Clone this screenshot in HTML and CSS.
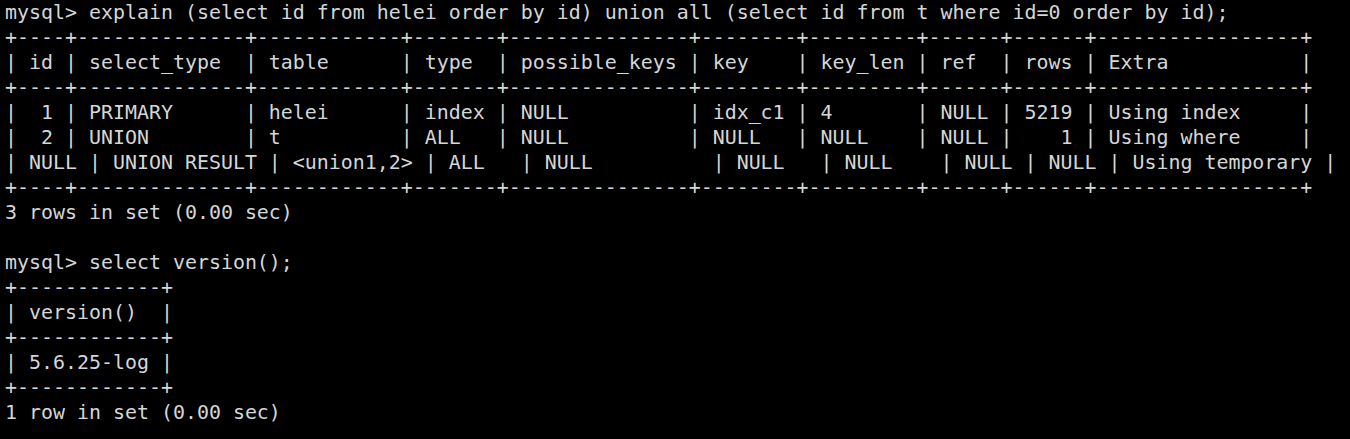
FILE: index.html
```html
<!DOCTYPE html>
<html lang="en">
<head>
<meta charset="utf-8">
<title>mysql</title>
<link rel="stylesheet" href="styles.css">
</head>
<body>
<pre class="terminal">mysql&gt; explain (select id from helei order by id) union all (select id from t where id=0 order by id);
+----+--------------+------------+-------+---------------+--------+---------+------+------+-----------------+
| id | select_type  | table      | type  | possible_keys | key    | key_len | ref  | rows | Extra           |
+----+--------------+------------+-------+---------------+--------+---------+------+------+-----------------+
|  1 | PRIMARY      | helei      | index | NULL          | idx_c1 | 4       | NULL | 5219 | Using index     |
|  2 | UNION        | t          | ALL   | NULL          | NULL   | NULL    | NULL |    1 | Using where     |
| NULL | UNION RESULT | &lt;union1,2&gt; | ALL   | NULL          | NULL   | NULL    | NULL | NULL | Using temporary |
+----+--------------+------------+-------+---------------+--------+---------+------+------+-----------------+
3 rows in set (0.00 sec)

mysql&gt; select version();
+------------+
| version()  |
+------------+
| 5.6.25-log |
+------------+
1 row in set (0.00 sec)</pre>
</body>
</html>
```

FILE: styles.css
```css
html, body {
  margin: 0;
  padding: 0;
  background: #000;
}

body {
  width: 1350px;
  height: 439px;
  overflow: hidden;
}

.terminal {
  margin: 0;
  padding: 0 0 0 5px;
  font-family: "DejaVu Sans Mono", monospace;
  font-size: 19.93px;
  line-height: 25px;
  color: #d6d6d6;
  white-space: pre;
}
```
